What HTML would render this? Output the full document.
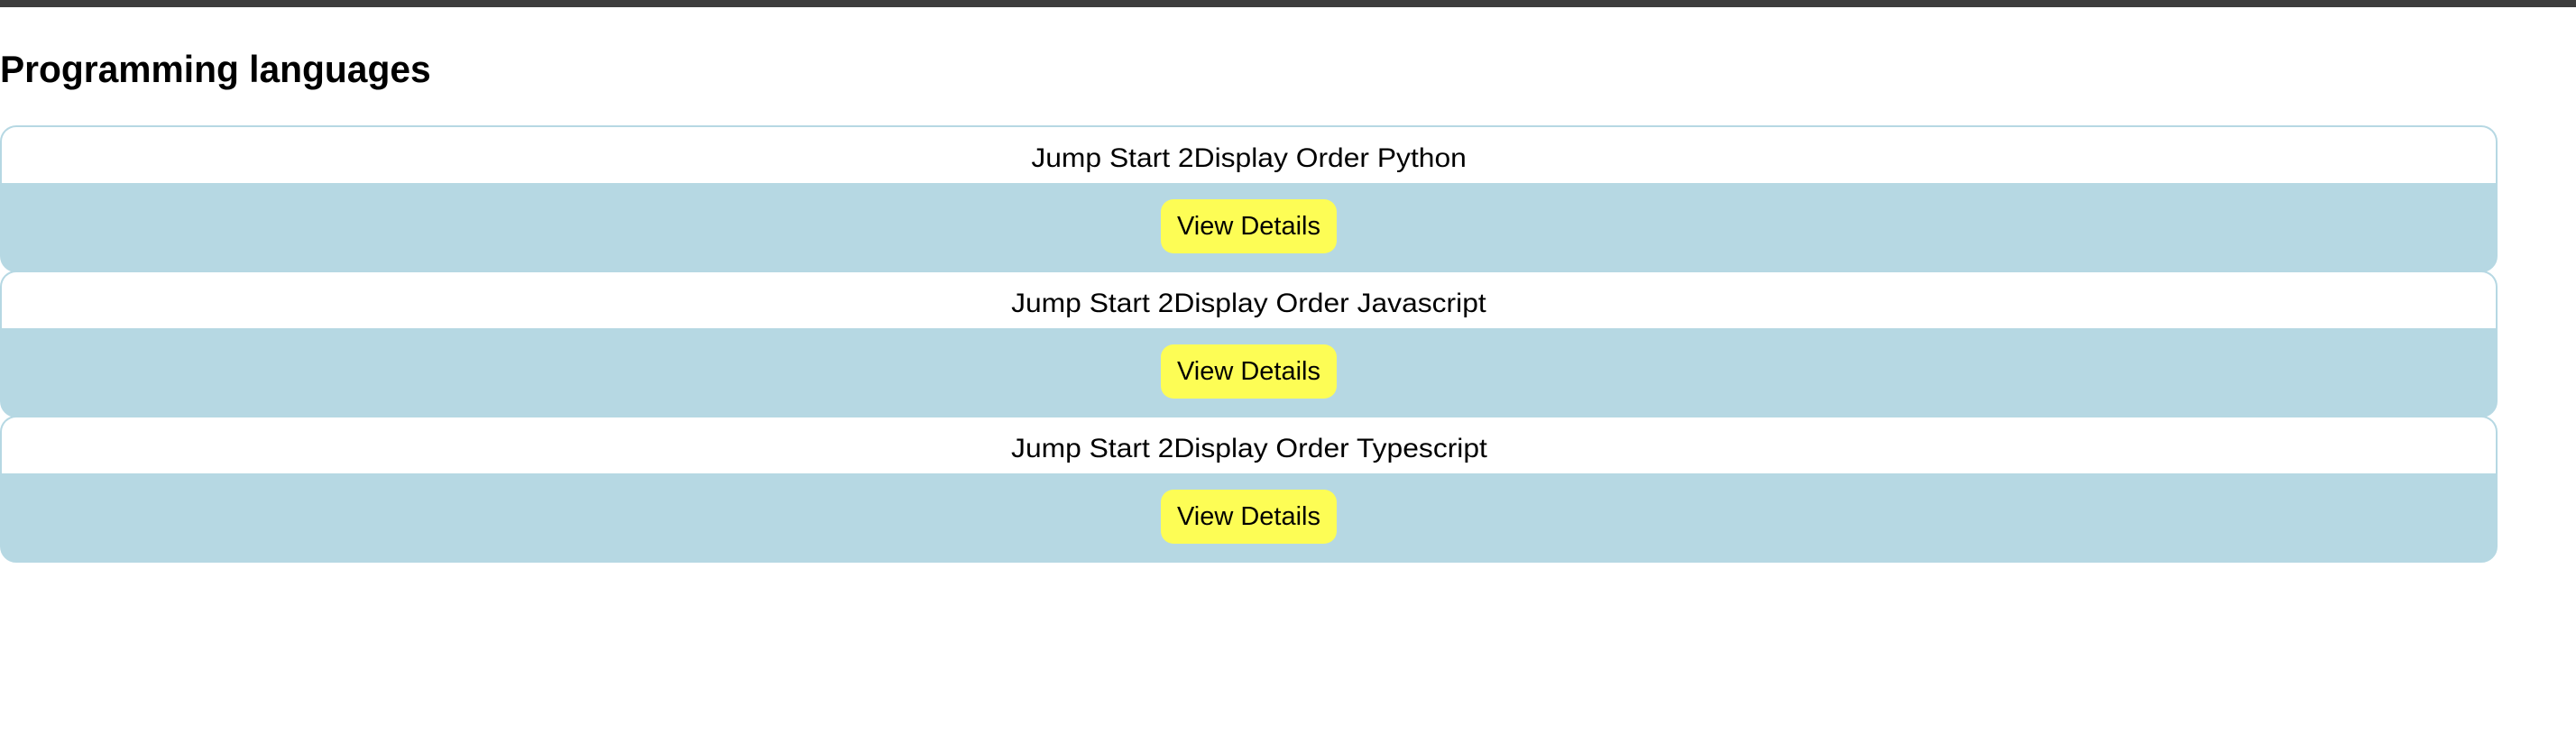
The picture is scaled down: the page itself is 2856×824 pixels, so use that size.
<!DOCTYPE html>
<html><head><meta charset="utf-8"><style>
*{margin:0;padding:0;box-sizing:border-box}
html,body{width:2856px;height:824px;background:#fff;overflow:hidden;font-family:"Liberation Sans",Arial,sans-serif;color:#000}
.bar{position:absolute;left:0;top:0;width:2856px;height:8px;background:#3d3d3d}
h1{position:absolute;left:0;top:56px;font-size:42px;line-height:42px;font-weight:bold;white-space:nowrap;transform:scaleX(0.97);transform-origin:0 0}
.card{position:absolute;left:0;width:2769px;height:163px;border:2px solid #b6d8e3;border-radius:18px;overflow:hidden;background:#b6d8e3}
.hd{position:absolute;left:0;top:0;width:100%;height:62px;background:#fff}
.t{position:absolute;left:0;width:100%;top:4px;height:62px;display:flex;align-items:center;justify-content:center;font-size:30px;white-space:nowrap}
.t span{display:inline-block;transform:scaleX(1.06)}
.btn{position:absolute;left:1285px;top:80px;width:195px;height:60px;background:#fdfd55;border-radius:14px;display:flex;align-items:center;justify-content:center;font-size:29px;white-space:nowrap}
</style></head><body>
<div class="bar"></div>
<h1>Programming languages</h1>
<div class="card" style="top:139px"><div class="hd"></div><div class="t"><span>Jump Start 2Display Order Python</span></div><div class="btn">View Details</div></div>
<div class="card" style="top:300px"><div class="hd"></div><div class="t"><span>Jump Start 2Display Order Javascript</span></div><div class="btn">View Details</div></div>
<div class="card" style="top:461px"><div class="hd"></div><div class="t"><span>Jump Start 2Display Order Typescript</span></div><div class="btn">View Details</div></div>
</body></html>
